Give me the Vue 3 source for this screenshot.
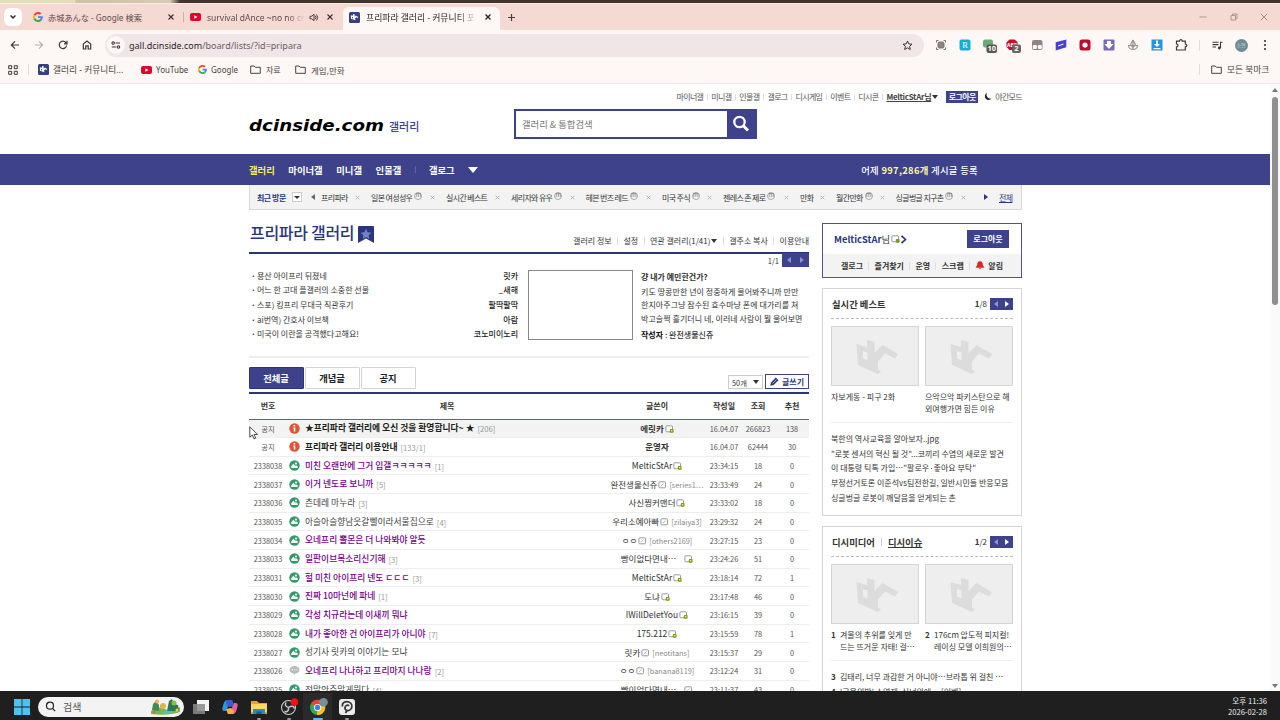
<script setup>
import {ref} from "vue";

const extensions = ['frame', 'r', 'green', 'abp', 'tamper', 'slash', 'rec', 'down', 'flame', 'blue', 'puzzle']

const topLinks = ['마이너갤', '미니갤', '인물갤', '갤로그', '디시게임', '이벤트', '디시콘']

const visits = [
  {name: '프리파라', width: 50},
  {name: '일본 여성성우', width: 75, minor: true},
  {name: '실시간 베스트', width: 65},
  {name: '세리자와 유우', width: 74.5, minor: true},
  {name: '헤븐 번즈 레드', width: 76.5, minor: true},
  {name: '미국 주식', width: 61, minor: true},
  {name: '젠레스 존 제로', width: 77, minor: true},
  {name: '만화', width: 36},
  {name: '월간만화', width: 59.5, minor: true},
  {name: '싱글벙글 지구촌', width: 81, minor: true},
]

const hotPosts = [
  {title: '용산 아이프리 뒤졌네', writer: '릿카'},
  {title: '어느 한 고대 플갤러의 소중한 선물', writer: '_새해'},
  {title: '스포) 킹프리 무대극 직관후기', writer: '팔딱팔딱'},
  {title: 'ai번역) 간호사 이브책', writer: '아람'},
  {title: '미국이 이란을 공격했다고해요!', writer: '코노미이노리'},
]

const tabs = ['전체글', '개념글', '공지']
const activeTab = ref('전체글')

// icon: notice | pic | talk, nick: fix (green lock) | semi | none
const posts = [
  {no: '공지', icon: 'notice', title: '★프리파라 갤러리에 오신 것을 환영합니다~ ★', reply: '206', writer: '에릿카', nick: 'fix', date: '16.04.07', count: '266823', rec: '138', bold: true, hover: true},
  {no: '공지', icon: 'notice', title: '프리파라 갤러리 이용안내', reply: '133/1', writer: '운영자', nick: 'none', date: '16.04.07', count: '62444', rec: '30', bold: true},
  {no: '2338038', icon: 'pic', title: '미친 오랜만에 그거 입갤ㅋㅋㅋㅋㅋ', reply: '1', writer: 'MelticStAr', nick: 'fix', date: '23:34:15', count: '18', rec: '0', visited: true},
  {no: '2338037', icon: 'pic', title: '이거 넨도로 보니까', reply: '5', writer: '완전생물신쥬', nick: 'semi', id: '[series1⋯', date: '23:33:49', count: '24', rec: '0', visited: true},
  {no: '2338036', icon: 'pic', title: '츤데레 마누라', reply: '3', writer: '사신찡커맨더', nick: 'fix', date: '23:33:02', count: '18', rec: '0'},
  {no: '2338035', icon: 'pic', title: '아슬아슬향남읏갈삘이라서울집으로', reply: '4', writer: '우리소예아빠', nick: 'semi', id: '[zilaiya3]', date: '23:29:32', count: '24', rec: '0'},
  {no: '2338034', icon: 'pic', title: '오네프리 뽈몬은 더 나와봐야 알듯', writer: 'ㅇㅇ', nick: 'semi', id: '[others2169]', date: '23:27:15', count: '23', rec: '0', visited: true},
  {no: '2338033', icon: 'pic', title: '일판이브목소리신기해', reply: '3', writer: '빵이없다면내⋯', nick: 'fix', far: true, date: '23:24:26', count: '51', rec: '0', visited: true},
  {no: '2338031', icon: 'pic', title: '헐 미친 아이프리 넨도 ㄷㄷㄷ', reply: '3', writer: 'MelticStAr', nick: 'fix', date: '23:18:14', count: '72', rec: '1', visited: true},
  {no: '2338030', icon: 'pic', title: '진짜 10마넌에 파네', reply: '1', writer: '도냐', nick: 'fix', date: '23:17:48', count: '46', rec: '0', visited: true},
  {no: '2338029', icon: 'pic', title: '각성 치규라는데 이새끼 뭐냐', writer: 'IWillDeletYou', nick: 'fix', date: '23:16:15', count: '39', rec: '0', visited: true},
  {no: '2338028', icon: 'pic', title: '내가 좋아한 건 아이프리가 아니야', reply: '7', writer: '175.212', nick: 'fix', date: '23:15:59', count: '78', rec: '1', visited: true},
  {no: '2338027', icon: 'pic', title: '성기사 릿카의 이야기는 모냐', writer: '릿카', nick: 'semi', id: '[neotitans]', date: '23:15:37', count: '29', rec: '0'},
  {no: '2338026', icon: 'talk', title: '오네프리 나나하고 프리마지 나나랑', reply: '2', writer: 'ㅇㅇ', nick: 'semi', id: '[banana8119]', date: '23:12:24', count: '31', rec: '0', visited: true},
  {no: '2338025', icon: 'pic', title: '전말안준말게뭔다', reply: '4', writer: '빵이없다면내⋯', nick: 'semi', far: true, date: '23:11:37', count: '43', rec: '0'},
]

const bestList = [
  '북한의 역사교육을 알아보자..jpg',
  '"로봇 센서의 혁신 될 것"...코끼리 수염의 새로운 발견',
  '이 대통령 틱톡 가입⋯"팔로우·좋아요 부탁"',
  '부정선거토론 이준석vs팀전한길, 일반시민들 반응모음',
  '싱글벙글 로봇이 깨달음을 얻게되는 촌',
]

const widgets = [
  {
    heads: ['실시간 베스트'],
    total: 8,
    cards: [{lines: ['자보게동 - 피구 2화']}, {lines: ['으악으악 파키스탄으로 해', '외여행가면 힘든 이유']}],
    list: bestList.map(text => ({text})),
  },
  {
    heads: ['디시미디어', '디시이슈'],
    total: 2,
    cards: [
      {rank: 1, lines: ['겨울의 추위를 잊게 만', '드는 뜨거운 자태! 걸⋯']},
      {rank: 2, lines: ['176cm 압도적 피지컬!', '레이싱 모델 이희원의⋯']},
    ],
    list: [
      {rank: 3, text: '김태리, 너무 과감한 거 아니야⋯브라톱 위 걸친 ⋯'},
      {rank: 4, text: "'금욕의밤' 소영재, 식녀의에⋯ [이벤]"},
    ],
  },
]
</script>

<template>
  <div class="screen">
    <div class="behind"></div>

    <div class="tabbar">
      <span class="tab-search">
        <svg width="8" height="8" viewBox="0 0 8 8"><path d="M1.6 2.6 4 5l2.4-2.4" fill="none" stroke="#222" stroke-width="1.4"/></svg>
      </span>
      <div class="tab tab-a">
        <svg class="google" width="10" height="10" viewBox="0 0 48 48">
          <path fill="#EA4335" d="M24 9.5c3.5 0 6.700 1.200 9.200 3.600l6.900-6.900C35.900 2.400 30.500 0 24 0 14.600 0 6.500 5.400 2.600 13.200l8 6.200C12.400 13.700 17.700 9.500 24 9.500z"/>
          <path fill="#4285F4" d="M47 24.500c0-1.600-.2-3.100-.4-4.500H24v9h12.900c-.6 3-2.300 5.500-4.800 7.200l7.700 6C44.400 38 47 31.800 47 24.500z"/>
          <path fill="#FBBC05" d="M10.500 28.600a14.500 14.500 0 0 1 0-9.200l-8-6.200a24 24 0 0 0 0 21.600z"/>
          <path fill="#34A853" d="M24 48c6.500 0 11.900-2.100 15.900-5.800l-7.700-6c-2.200 1.500-4.900 2.300-8.200 2.300-6.300 0-11.600-4.200-13.500-9.900l-8 6.200C6.500 42.600 14.600 48 24 48z"/>
        </svg>
        <span class="tab-text">赤城あんな - Google 検索</span>
        <svg class="close" width="8" height="8" viewBox="0 0 8 8"><path d="M1.500 1.500 6.500 6.500M6.500 1.500 1.500 6.500" stroke="#3b2f2d" stroke-width="1.100"/></svg>
      </div>
      <i class="tab-sep"></i>
      <div class="tab tab-b">
        <svg width="11" height="8" viewBox="0 0 11 8"><rect width="11" height="8" rx="2" fill="#e0032c"/><path d="M4.300 2.200v3.600L7.500 4z" fill="#fff"/></svg>
        <span class="tab-text fade">survival dAnce ~no no cry</span>
        <svg class="sound" width="10" height="9" viewBox="0 0 10 9"><path d="M1 3.200h1.800L5 1.300v6.400L2.800 5.800H1zM6.300 2.800q1.400 1.700 0 3.400M7.500 1.500q2.400 3 0 6" fill="none" stroke="#3b2f2d" stroke-width=".9"/></svg>
        <svg class="close" width="8" height="8" viewBox="0 0 8 8"><path d="M1.500 1.500 6.500 6.500M6.500 1.500 1.500 6.500" stroke="#3b2f2d" stroke-width="1.100"/></svg>
      </div>
      <div class="tab tab-c">
        <svg width="11" height="11" viewBox="0 0 11 11"><rect width="11" height="11" rx="1.500" fill="#37417f"/><path d="M1.800 3.300 4 3.800V2l1.700.6v2.200l1.300-1.300 2.300 1.700-.8.900-1.300-.8-1.200 1.300.5 1.700-4.500-1.600zM3 5v1.200l1 .4V5.300z" fill="#fff" fill-rule="evenodd"/></svg>
        <span class="tab-text fade">프리파라 갤러리 - 커뮤니티 포</span>
        <svg class="close" width="8" height="8" viewBox="0 0 8 8"><path d="M1.500 1.500 6.500 6.500M6.500 1.500 1.500 6.500" stroke="#222" stroke-width="1.300"/></svg>
      </div>
      <svg class="newtab" width="9" height="9" viewBox="0 0 9 9"><path d="M4.500 1v7M1 4.500h7" stroke="#4d3c39" stroke-width="1.200"/></svg>
      <div class="winctl">
        <svg width="8" height="8" viewBox="0 0 8 8"><path d="M.5 4h7" stroke="#b08e88" stroke-width=".9"/></svg>
        <svg width="8" height="8" viewBox="0 0 8 8"><path d="M1 2.500h4.500V7H1zM2.500 2.500V1H7v4.500H5.500" fill="none" stroke="#b08e88" stroke-width=".9"/></svg>
        <svg width="8" height="8" viewBox="0 0 8 8"><path d="m.8.800 6.400 6.400M7.200.8.800 7.200" stroke="#a3827c" stroke-width=".9"/></svg>
      </div>
    </div>

    <div class="toolbar">
      <span class="tool"><svg width="10" height="10" viewBox="0 0 10 10"><path d="M9 5H1.500M5 1.300 1.300 5 5 8.700" fill="none" stroke="#3d3735" stroke-width="1.200"/></svg></span>
      <span class="tool"><svg width="10" height="10" viewBox="0 0 10 10"><path d="M1 5h7.500M5 1.300 8.700 5 5 8.700" fill="none" stroke="#b5aeac" stroke-width="1.100"/></svg></span>
      <span class="tool"><svg width="10" height="10" viewBox="0 0 10 10"><path d="M8.600 5.500A3.700 3.700 0 1 1 7.800 2.500L9 3.800M9 .8v3H6" fill="none" stroke="#3d3735" stroke-width="1.200"/></svg></span>
      <span class="tool"><svg width="10" height="10" viewBox="0 0 10 10"><path d="M1.300 9V4L5 1.100 8.700 4v5H6.200V5.800H3.800V9z" fill="none" stroke="#3d3735" stroke-width="1.200"/></svg></span>
      <div class="omnibox">
        <span class="site-info"><svg width="10" height="8" viewBox="0 0 10 8" fill="none" stroke="#3d3735" stroke-width="1.100"><circle cx="2.200" cy="2" r="1.200"/><path d="M4.500 2H9M.8 6h4.500"/><circle cx="7.500" cy="6" r="1.200"/></svg></span>
        <span class="url"><b>gall.dcinside.com</b>/board/lists/?id=pripara</span>
        <svg class="star" width="11" height="11" viewBox="0 0 11 11"><path d="m5.500 1 1.300 2.900 3.200.3-2.400 2.100.7 3.200-2.800-1.700-2.800 1.700.7-3.200L1 4.200l3.200-.3z" fill="none" stroke="#3d3735" stroke-width="1"/></svg>
      </div>
      <div class="exts">
        <span class="tool" v-for="ext in extensions" :key="ext">
          <svg width="16" height="16" viewBox="0 0 16 16">
            <g v-if="ext == 'frame'" fill="none" stroke="#77716f"><path d="M3.500 5.500V3.500h2M10.500 3.500h2v2M12.500 10.500v2h-2M5.500 12.500h-2v-2"/><rect x="5" y="5" width="6" height="6" rx="1.500" fill="#8b8583"/></g>
            <g v-if="ext == 'r'"><rect x="2.500" y="2.500" width="11" height="11" rx="2" fill="#16aed6"/><text x="8" y="11.200" text-anchor="middle" font-size="8.500" fill="#fff" font-family="Liberation Serif">R</text></g>
            <g v-if="ext == 'green'"><rect x="2" y="2.500" width="10" height="8" rx="2" fill="#6cab76"/><rect x="5.500" y="7.500" width="10.500" height="8.500" rx="2" fill="#575553"/><text x="10.800" y="14.400" text-anchor="middle" font-size="7.500" font-weight="700" fill="#fff" font-family="Noto Sans">10</text></g>
            <g v-if="ext == 'abp'"><path d="M4.500 2.500h5L12.500 5v5l-3 3h-5l-3-3V5.500z" fill="#c70d2c"/><text x="7" y="9.500" text-anchor="middle" font-size="5" font-weight="700" fill="#fff" font-family="Noto Sans">ABP</text><rect x="7" y="7.500" width="9" height="8.500" rx="2" fill="#666260"/><text x="11.500" y="14.400" text-anchor="middle" font-size="7.500" font-weight="700" fill="#fff" font-family="Noto Sans">2</text></g>
            <g v-if="ext == 'tamper'"><rect x="3" y="3" width="10.500" height="10" rx="2" fill="#8a8785"/><rect x="3.800" y="8" width="4" height="4" rx="1" fill="#fff"/><rect x="8.800" y="8" width="4" height="4" rx="1" fill="#fff"/></g>
            <g v-if="ext == 'slash'"><path d="M2.700 5.200 13.300 2.600v7.600L2.700 13.500z" fill="#4b3fd0"/><path d="m5 9 5.500-2" stroke="#fff" stroke-width="1"/></g>
            <g v-if="ext == 'rec'"><rect x="2.500" y="2.500" width="11" height="11" rx="2.500" fill="#c30731"/><circle cx="8" cy="8" r="2.600" fill="#fff"/></g>
            <g v-if="ext == 'down'"><rect x="2.500" y="2.500" width="11" height="11" rx="1" fill="#7a68b8"/><path d="M6 4h4v3h2.500L8 12 3.500 7H6z" fill="#fff"/></g>
            <g v-if="ext == 'flame'"><path d="M8 3c.5 2 2.500 3 2.500 5.500M8 3c-.5 2-2.500 3-2.500 5.500M3.500 8.500a4.500 4 0 0 0 9 0zM8 5v7M5.500 7.500 8 10.500l2.500-3" fill="none" stroke="#999491" stroke-width="1.200"/></g>
            <g v-if="ext == 'blue'"><rect x="2.500" y="2.500" width="11" height="11" fill="#1e97e4"/><path d="M7 3.500h2V7h2l-3 3-3-3h2zM4.500 11h7v1.200h-7z" fill="#fff"/></g>
            <path v-if="ext == 'puzzle'" d="M3.500 4.200h3c-.2-2 3-2 2.800 0h3V7c2 0 2 2.800 0 2.800v3.200H3.500V9.800c2 0 2-2.800 0-2.800z" fill="none" stroke="#3d3735" stroke-width="1.200"/>
          </svg>
        </span>
      </div>
      <i class="tool-sep"></i>
      <span class="tool"><svg width="11" height="9" viewBox="0 0 11 9"><path d="M.5 1.200h6M.5 3.600h6M.5 6h3.500" stroke="#3d3735" stroke-width="1.100"/><path d="M8.500 7V1.200h2" fill="none" stroke="#3d3735" stroke-width="1.100"/><circle cx="7.300" cy="7" r="1.400" fill="#3d3735"/></svg></span>
      <span class="tool"><span class="avatar">소연</span></span>
      <span class="tool"><svg width="4" height="12" viewBox="0 0 4 12" fill="#3d3735"><circle cx="2" cy="2" r="1.100"/><circle cx="2" cy="6" r="1.100"/><circle cx="2" cy="10" r="1.100"/></svg></span>
    </div>

    <div class="bookmarks">
      <svg class="apps" width="10" height="10" viewBox="0 0 10 10" fill="none" stroke="#3d3735"><path d="M.7.700h3v3h-3zM6.300.7h3v3h-3zM.7 6.300h3v3h-3zM6.300 6.300h3v3h-3z"/></svg>
      <i class="bm-sep"></i>
      <span class="bm bm-gall"><svg width="11" height="11" viewBox="0 0 11 11"><rect width="11" height="11" rx="1.500" fill="#37417f"/><path d="M1.800 3.300 4 3.800V2l1.700.6v2.200l1.300-1.300 2.300 1.700-.8.900-1.300-.8-1.200 1.300.5 1.700-4.500-1.600zM3 5v1.200l1 .4V5.300z" fill="#fff" fill-rule="evenodd"/></svg>갤러리 - 커뮤니티...</span>
      <span class="bm bm-yt"><svg width="11" height="8" viewBox="0 0 11 8"><rect width="11" height="8" rx="2" fill="#e0032c"/><path d="M4.300 2.200v3.600L7.500 4z" fill="#fff"/></svg>YouTube</span>
      <span class="bm bm-g">
        <svg width="9" height="9" viewBox="0 0 48 48">
          <path fill="#EA4335" d="M24 9.500c3.500 0 6.700 1.200 9.200 3.600l6.900-6.900C35.900 2.400 30.500 0 24 0 14.600 0 6.500 5.400 2.600 13.200l8 6.200C12.400 13.700 17.700 9.500 24 9.500z"/>
          <path fill="#4285F4" d="M47 24.500c0-1.600-.2-3.100-.4-4.500H24v9h12.900c-.6 3-2.300 5.500-4.800 7.200l7.700 6C44.400 38 47 31.800 47 24.500z"/>
          <path fill="#FBBC05" d="M10.500 28.600a14.500 14.500 0 0 1 0-9.200l-8-6.200a24 24 0 0 0 0 21.600z"/>
          <path fill="#34A853" d="M24 48c6.500 0 11.900-2.100 15.900-5.800l-7.700-6c-2.200 1.500-4.900 2.300-8.200 2.300-6.300 0-11.600-4.200-13.500-9.900l-8 6.200C6.500 42.600 14.600 48 24 48z"/>
        </svg>Google</span>
      <span class="bm bm-f1"><svg width="11" height="9" viewBox="0 0 11 9"><path d="M.7 1h3.500l1.200 1.300h4.900V8.300H.7z" fill="none" stroke="#4a4341"/></svg>자료</span>
      <span class="bm bm-f2"><svg width="11" height="9" viewBox="0 0 11 9"><path d="M.7 1h3.500l1.200 1.300h4.900V8.300H.7z" fill="none" stroke="#4a4341"/></svg>게임,만화</span>
      <i class="bm-sep last"></i>
      <span class="bm bm-all"><svg width="11" height="9" viewBox="0 0 11 9"><path d="M.7 1h3.500l1.200 1.300h4.900V8.300H.7z" fill="none" stroke="#4a4341"/></svg>모든 북마크</span>
    </div>

    <div class="viewport">
      <div class="page">
        <header class="wrap header">
          <div class="utils">
            <a v-for="link in topLinks" :key="link">{{ link }}</a>
            <a class="me">MelticStAr님</a>
            <i class="down small"></i>
            <span class="logout">로그아웃</span>
            <svg class="moon" width="8" height="9" viewBox="0 0 8 9"><path d="M3 .8A3.800 3.800 0 1 0 7.700 6.500 4 4 0 0 1 3 .8z" fill="#222"/></svg>
            <span class="night">야간모드</span>
          </div>
          <div class="brand-row">
            <svg class="logo" width="136" height="18" viewBox="0 0 136 18"><text x="0" y="14" textLength="135" lengthAdjust="spacingAndGlyphs">dcinside.com</text></svg>
            <span class="logo-sub">갤러리</span>
            <div class="search">
              <span>갤러리 &amp; 통합검색</span>
              <div class="search-btn"><svg width="18" height="18" viewBox="0 0 18 18"><circle cx="7.500" cy="7" r="5.200" fill="none" stroke="#fff" stroke-width="2.300"/><path d="m11.300 10.800 4.700 4.700" stroke="#fff" stroke-width="3"/></svg></div>
            </div>
          </div>
        </header>

        <nav class="gnb">
          <div class="wrap gnb-in">
            <a class="on">갤러리</a><a>마이너갤</a><a>미니갤</a><a>인물갤</a><i class="gnb-sep"></i><a>갤로그</a><i class="down white"></i>
            <span class="posts-count">어제 <b>997,286개</b> 게시글 등록</span>
          </div>
        </nav>

        <div class="wrap visit">
          <b>최근 방문</b>
          <span class="visit-btn"><i class="down tiny"></i></span>
          <i class="tri left dark"></i>
          <div class="visit-items">
            <span class="visit-item" v-for="visit in visits" :key="visit.name" :style="{width: visit.width + 'px'}">
              {{ visit.name }}<em v-if="visit.minor">m</em><svg width="5" height="5" viewBox="0 0 5 5"><path d="m.7.700 3.600 3.600M4.300.7.700 4.300" stroke="#aaa" stroke-width=".8"/></svg>
            </span>
          </div>
          <i class="tri right dark"></i>
          <a>전체</a>
        </div>

        <div class="wrap content">
          <main>
            <div class="gall-head">
              <h1>프리파라 갤러리</h1>
              <svg width="16" height="17" viewBox="0 0 16 17"><path d="M0 1q0-1 1-1h14q1 0 1 1v16l-8-4.500L0 17z" fill="#29367c"/><path d="m8 2.800 1.600 3.500 3.900.4-2.900 2.600.8 3.700L8 11.100 4.600 13l.8-3.700-2.900-2.600 3.900-.4z" fill="#7481c8"/></svg>
              <div class="gall-links">
                <a>갤러리 정보</a><a>설정</a><a>연관 갤러리(1/41)<i class="down small"></i></a><a>갤주소 복사</a><a>이용안내</a>
              </div>
            </div>

            <section class="hot">
              <div class="pager"><span>1/1</span><div class="arrows wide"><i class="tri left dim"></i><i class="tri right dim"></i></div></div>
              <ul>
                <li v-for="post in hotPosts" :key="post.title"><span>{{ post.title }}</span><b>{{ post.writer }}</b></li>
              </ul>
              <div class="thumb"></div>
              <div class="preview">
                <strong>걍 내가 예민한건가?</strong>
                <p>키도 땅콩만한 년이 정중하게 물어봐주니까 만만<br>한지아주그냥 잠수된 효수마냥 폰에 대가리를 쳐<br>박고슬쩍 흘기더니 네, 이러네 사람이 뭘 물어보면</p>
                <div class="author"><b>작성자</b> : 완전생물신쥬</div>
              </div>
            </section>

            <div class="list-bar">
              <button
                  v-for="tab in tabs"
                  :key="tab"
                  :class="{active: tab == activeTab}"
                  @click="activeTab = tab">{{ tab }}</button>
              <span class="select">50개<i class="down small"></i></span>
              <span class="write"><svg width="9" height="9" viewBox="0 0 9 9"><path d="M.3 8.700 1 5.400 5.800.5l2.700 2.700-4.900 4.800z" fill="#29367c"/><path d="m2.500 6.500 4-4" stroke="#fff" stroke-width=".6"/></svg>글쓰기</span>
            </div>

            <div class="table">
              <div class="row thead"><span>번호</span><span>제목</span><span>글쓴이</span><span>작성일</span><span>조회</span><span>추천</span></div>
              <div class="row" v-for="post in posts" :key="post.no + post.title" :class="{bold: post.bold, hover: post.hover}">
                <span class="num">{{ post.no }}</span>
                <span class="title" :class="{visited: post.visited}">
                  <svg width="11" height="11" viewBox="0 0 11 11">
                    <g v-if="post.icon == 'notice'"><circle cx="5.500" cy="5.500" r="5.200" fill="#de5635"/><path d="M4.300 4.500h2v4h-1.500V5.500h-.5zM4.600 2h1.600v1.600H4.600z" fill="#fff"/></g>
                    <g v-if="post.icon == 'pic'"><circle cx="5.500" cy="5.500" r="5.200" fill="#35996a"/><path d="M2.300 8V6.200l2-2.400 1.900 2 .9-.6L8.700 6.500V8z" fill="#fff"/><circle cx="7" cy="3.500" r="1.100" fill="#fff"/></g>
                    <g v-if="post.icon == 'talk'"><ellipse cx="5.500" cy="4.800" rx="5" ry="3.700" fill="#b9b9b9"/><path d="m4.500 8 1 1.800 1-1.800z" fill="#b9b9b9"/><path d="M2.800 4.800h1.200M5 4.800h1.200M7.200 4.800h1.200" stroke="#fff" stroke-width="1"/></g>
                  </svg>
                  <a>{{ post.title }}</a><em v-if="post.reply">[{{ post.reply }}]</em>
                </span>
                <span class="writer" :class="{far: post.far}">
                  {{ post.writer }}<svg v-if="post.nick != 'none'" width="9" height="8" viewBox="0 0 9 8"><rect x=".9" y=".8" width="6.600" height="6" rx="1" fill="#fff" stroke="#999" stroke-width="1"/><path v-if="post.nick == 'semi'" d="m2.800 5 2.600-2.400" stroke="#aaa" stroke-width=".9"/><rect v-if="post.nick == 'fix'" x="4.800" y="3.900" width="3.800" height="3.800" rx="1" fill="#7d9c0e"/><rect v-if="post.nick == 'fix'" x="6" y="5" width="1.400" height="1.400" fill="#e9f08c"/></svg><em v-if="post.id">{{ post.id }}</em>
                </span>
                <span>{{ post.date }}</span>
                <span>{{ post.count }}</span>
                <span>{{ post.rec }}</span>
              </div>
            </div>
          </main>

          <aside>
            <section class="login">
              <div class="login-top">
                <b>MelticStAr</b>님
                <svg width="9" height="8" viewBox="0 0 9 8"><rect x=".9" y=".8" width="6.600" height="6" rx="1" fill="#fff" stroke="#999" stroke-width="1"/><rect x="4.800" y="3.900" width="3.800" height="3.800" rx="1" fill="#7d9c0e"/></svg>
                <svg width="7" height="9" viewBox="0 0 7 9"><path d="M1.500.8 5.500 4.500 1.500 8.200" fill="none" stroke="#29367c" stroke-width="1.700"/></svg>
                <span class="logout">로그아웃</span>
              </div>
              <div class="login-menu">
                <a>갤로그</a><a>즐겨찾기</a><a>운영</a><a>스크랩</a>
                <a><svg width="10" height="9" viewBox="0 0 10 9"><path d="M5 .3C2.800.3 2.200 2 2.200 4L.6 6.800h8.800L7.800 4C7.800 2 7.200.3 5 .3zM3.800 7.300h2.400Q5 9 3.800 7.300z" fill="#d92a21"/></svg>알림</a>
              </div>
            </section>

            <section class="widget" v-for="widget in widgets" :key="widget.total">
              <div class="widget-head">
                <h3 v-for="head in widget.heads" :key="head">{{ head }}</h3>
                <span class="pages"><b>1</b>/{{ widget.total }}</span>
                <div class="arrows"><i class="tri left dim"></i><i class="tri right"></i></div>
              </div>
              <div class="cards">
                <div class="card" v-for="card in widget.cards" :key="card.lines[0]">
                  <div class="noimg"><svg width="86" height="58" viewBox="0 0 86 58" fill="#dcdcdc"><path d="M24.500 17 35 20v-7l7.500 2v11l8-8 15.500 9-3 4.500-10-5-7 8v8l3 2-3 2.500-20-9zM31 24v7.500l4.500 2V25.500z" fill-rule="evenodd"/></svg></div>
                  <div class="caption">
                    <b v-if="card.rank">{{ card.rank }}</b>
                    <span><template v-for="line in card.lines" :key="line">{{ line }}<br></template></span>
                  </div>
                </div>
              </div>
              <ul>
                <li v-for="item in widget.list" :key="item.text"><b v-if="item.rank">{{ item.rank }}</b>{{ item.text }}</li>
              </ul>
            </section>
          </aside>
        </div>
      </div>
      <div class="scrollbar"><i class="up"></i><div class="thumb-bar"></div><i class="dn"></i></div>
    </div>

    <div class="taskbar">
      <svg class="start" width="16" height="16" viewBox="0 0 16 16" fill="#4cc2f4"><path d="M0 0h7.600v7.600H0zM8.400 0H16v7.600H8.400zM0 8.400h7.600V16H0zM8.400 8.400H16V16H8.400z"/></svg>
      <div class="task-search">
        <svg width="11" height="11" viewBox="0 0 11 11"><circle cx="5" cy="4.700" r="3.500" fill="none" stroke="#222" stroke-width="1.200"/><path d="m7.500 7.300 2.700 2.900" stroke="#222" stroke-width="1.200"/></svg>
        <span>검색</span>
        <svg width="31" height="17" viewBox="0 0 31 17"><path d="M1 13q7-6 14-2t15-2v5q-12 4-29 2z" fill="#7eb64e"/><path d="M2 12 3 6l3-3 3 4v6z" fill="#3b8c50"/><circle cx="13" cy="8" r="3" fill="#e3b148"/><circle cx="7" cy="3.500" r="2" fill="#f4b14e"/><path d="M17 13 19 3l3-2 2 5 4 1 1 6z" fill="#2c7752"/><circle cx="24" cy="5" r="2.500" fill="#8abf3d"/><path d="M12 16q3-5 7-3l3 2z" fill="#54bfc5"/><circle cx="4" cy="14" r="1.500" fill="#dc664b"/><circle cx="27" cy="12" r="1.500" fill="#eec95e"/></svg>
      </div>
      <div class="task"><svg width="18" height="18" viewBox="0 0 18 18"><rect x="5" y="2" width="12" height="11" fill="#f5f5f5"/><rect x="1" y="6" width="12" height="10" fill="#8a8a8a" opacity=".85"/></svg></div>
      <div class="task"><svg width="18" height="18" viewBox="0 0 18 18"><path d="M6 2h5l1.500 4H8L5 13H3.500Q.5 13 1.500 9.500L3 4.500Q4 2 6 2z" fill="#239cdd"/><path d="M5.500 2h5.300L13 8l-5 1-3-3z" fill="#3d5bd3"/><path d="M12 16H7l-1.500-4H10l3-7h1.500q3 0 2 3.500L15 13.500Q14 16 12 16z" fill="#e4609b"/><path d="M12 16H7l-2-5 5-1 3 3z" fill="#efb33b"/></svg></div>
      <div class="task open"><svg width="18" height="18" viewBox="0 0 18 18"><path d="M1 3h6l2 2h8v11H1z" fill="#eba41f"/><path d="M1 6h16v8H1z" fill="#ffd75e"/><path d="M3 11h12v5H3z" fill="#2d87c8"/><path d="M6.500 13.500h5V16h-5z" fill="#145a94"/></svg></div>
      <div class="task open"><svg width="20" height="18" viewBox="0 0 20 18"><circle cx="9.500" cy="9.500" r="7" fill="#26252a" stroke="#c9c9c9" stroke-width="1.100"/><path d="M9.500 9.500Q5 8 7 4.500M9.500 9.500q4.500-3 6 1M9.500 9.500q.5 5-4 4" fill="none" stroke="#c9c9c9" stroke-width="1.500"/><circle cx="15.500" cy="4" r="3.800" fill="#ee1111"/></svg></div>
      <div class="task open current"><svg width="20" height="18" viewBox="0 0 20 18"><circle cx="9.500" cy="9.500" r="7.500" fill="#34a853"/><path d="M9.500 9.500 3 5.700a7.500 7.500 0 0 1 13.500.6z" fill="#ea4335"/><path d="M9.500 9.500 16.500 6.300A7.500 7.500 0 0 1 9 17z" fill="#fbc116"/><circle cx="9.500" cy="9.500" r="3.600" fill="#fff"/><circle cx="9.500" cy="9.500" r="2.700" fill="#3f80ea"/><circle cx="15.500" cy="4.300" r="4.300" fill="#78909c"/></svg></div>
      <div class="task open"><svg width="18" height="18" viewBox="0 0 18 18"><rect x="1" y="1" width="16" height="16" rx="3" fill="#ececec"/><path d="M4.500 8.500C3.500 4 8 3 11 4s4 5 1.500 7.500-6 .5-5.500-2S10 6.500 11 8M9 12.500 7.500 15" fill="none" stroke="#333" stroke-width="1.700"/></svg></div>
      <div class="clock">오후 11:36<br>2026-02-28</div>
    </div>

    <svg class="cursor" width="10" height="14" viewBox="0 0 10 14"><path d="M.8.800v10.400l2.500-2.300 1.700 4 1.700-.7L5 8.400h3.500z" fill="#fff" stroke="#222" stroke-width=".8"/></svg>
  </div>
</template>

<style>
body {
  margin: 0;
  overflow: hidden;
}
</style>

<style scoped>
.screen {
  position: relative;
  width: 1280px;
  height: 720px;
  overflow: hidden;
  display: flex;
  flex-direction: column;
  background: #fff;
  color: #333;
  font-family: "Noto Sans CJK KR", "Noto Sans", sans-serif;
  font-size: 8px;
  white-space: nowrap;
}

.screen * {
  box-sizing: border-box;
}

svg {
  display: block;
  flex: none;
}

i, em {
  font-style: normal;
}

/* browser chrome */
.behind {
  height: 3px;
  flex: none;
  background: linear-gradient(90deg, #e3dfba 0 75px, #cfc4a6 76px 110px, #d8cbb4 170px, #40362e 180px);
}

.tabbar {
  height: 27px;
  flex: none;
  display: flex;
  align-items: center;
  padding-left: 4px;
  background: #f5d9d3;
  border-top: 1px solid #fbebe7;
  font-family: "Noto Sans", "Noto Sans CJK JP", "Noto Sans CJK KR", sans-serif;
  font-size: 8.5px;
  color: #5c4d4a;
}

.tab-search {
  width: 18px;
  height: 18px;
  border-radius: 6px;
  background: #fff;
  display: flex;
  align-items: center;
  justify-content: center;
}

.tab {
  display: flex;
  align-items: center;
}

.tab-a {
  width: 161px;
  padding: 0 8px 0 11px;
}

.tab-text {
  margin-left: 6px;
  overflow: hidden;
}

.tab-a .tab-text {
  margin-left: 5px;
  font-size: 8.2px;
}

.fade {
  -webkit-mask-image: linear-gradient(90deg, #000 82%, transparent);
}

.close {
  margin-left: auto;
}

.tab-sep {
  width: 1px;
  height: 10px;
  background: #d3aca5;
}

.tab-b {
  width: 159px;
  padding: 0 9px 0 6px;
}

.tab-b .tab-text {
  width: 98px;
}

.sound {
  margin-left: 4px;
}

.tab-c {
  width: 157px;
  height: 23px;
  align-self: flex-end;
  padding: 0 8px 3px 6px;
  border-radius: 6px 6px 0 0;
  background: #fdf8f5;
  color: #2b2423;
  font-family: "Noto Sans CJK KR", sans-serif;
  font-size: 8.9px;
}

.tab-c .tab-text {
  width: 111px;
}

.newtab {
  margin-left: 7px;
}

.winctl {
  margin-left: auto;
  display: flex;
  gap: 22.5px;
  padding-right: 12px;
}

.toolbar {
  height: 30px;
  flex: none;
  display: flex;
  align-items: center;
  padding-left: 3px;
  background: #fdf8f5;
}

.tool {
  width: 24px;
  display: flex;
  align-items: center;
  justify-content: center;
}

.omnibox {
  width: 819px;
  height: 23px;
  margin-left: 6px;
  border-radius: 12px;
  background: #f0e5e7;
  display: flex;
  align-items: center;
}

.site-info {
  width: 18px;
  height: 18px;
  margin-left: 2px;
  border-radius: 50%;
  background: #fdf8f5;
  display: flex;
  align-items: center;
  justify-content: center;
}

.url {
  margin-left: 4px;
  font-family: "Noto Sans", sans-serif;
  font-size: 9px;
  color: #6a5f5f;
}

.url b {
  font-weight: 400;
  color: #2d2625;
}

.star {
  margin-left: auto;
  margin-right: 11px;
}

.exts {
  display: flex;
  margin-left: 5px;
}

.tool-sep {
  width: 1px;
  height: 11px;
  margin: 0 5px 0 6px;
  background: #ecd9d6;
}

.avatar {
  width: 13px;
  height: 13px;
  border-radius: 50%;
  background: #6e8c96;
  color: #c9d8dc;
  font-size: 5px;
  line-height: 12px;
  text-align: center;
}

.bookmarks {
  height: 24px;
  flex: none;
  display: flex;
  align-items: center;
  padding: 0 10px 4px 8px;
  background: #fdf8f5;
  border-bottom: 1px solid #eee6e4;
  font-family: "Noto Sans", "Noto Sans CJK KR", sans-serif;
  font-size: 8px;
  color: #4a4341;
}

.bm-sep {
  width: 1px;
  height: 11px;
  margin-left: 10px;
  background: #ecd9d6;
}

.bm {
  display: flex;
  align-items: center;
  gap: 4px;
}

.bm-gall {
  width: 103px;
  margin-left: 9px;
  font-size: 8.7px;
}

.bm-yt {
  width: 57px;
}

.bm-g {
  width: 52px;
}

.bm-f1 {
  width: 45px;
  gap: 5px;
}

.bm-f2 {
  gap: 5px;
  font-size: 8.5px;
}

.bm-sep.last {
  margin-left: auto;
  margin-right: 11px;
}

.bm-all {
  gap: 5px;
  width: 59px;
  font-size: 8.7px;
}

/* page */
.viewport {
  height: 607px;
  flex: none;
  display: flex;
  overflow: hidden;
}

.page {
  width: 1270px;
  background: #fff;
}

.wrap {
  width: 773px;
  margin-left: 249px;
}

.down {
  display: inline-block;
  border: 3.5px solid transparent;
  border-bottom: 0;
  border-top: 4px solid #333;
}

.down.white {
  border-width: 6px 5px 0;
  border-top-color: #fff;
}

.down.tiny {
  border-width: 3px 3px 0;
}

.tri {
  border: 3px solid transparent;
}

.tri.left {
  border-right: 4px solid #fff;
  border-left: 0;
}

.tri.right {
  border-left: 4px solid #fff;
  border-right: 0;
}

.tri.left.dark {
  border-right-color: #666;
}

.tri.right.dark {
  border-left-color: #29367c;
}

.tri.left.dim {
  border-right-color: #8c95cf;
}

.tri.right.dim {
  border-left-color: #8c95cf;
}

.header {
  height: 70px;
}

.utils {
  height: 25px;
  display: flex;
  align-items: center;
  justify-content: flex-end;
  letter-spacing: -.67px;
  color: #555;
}

.utils a {
  display: flex;
  align-items: center;
}

.utils a:not(.me)::after {
  content: "";
  width: 1px;
  height: 6px;
  margin: 0 3.5px;
  background: #ddd;
}

.utils .me {
  font-weight: 700;
  letter-spacing: -.3px;
  color: #444;
  text-decoration: underline;
}

.utils .down {
  margin-left: 1px;
}

.logout {
  background: #3d428b;
  color: #fff;
  font-weight: 700;
  text-align: center;
}

.utils .logout {
  width: 32px;
  height: 12px;
  line-height: 12px;
  margin-left: 8px;
}

.moon {
  margin: 0 3px 0 6px;
}

.brand-row {
  display: flex;
  align-items: flex-start;
}

.logo {
  margin-top: 8px;
  overflow: visible;
}

.logo text {
  font-family: "DejaVu Sans", sans-serif;
  font-weight: 700;
  font-style: italic;
  font-size: 16.5px;
  fill: #000;
}

.logo-sub {
  margin: 8px 0 0 4px;
  width: 125px;
  font-size: 11px;
  font-weight: 500;
  line-height: 18px;
  color: #3d428b;
}

.search {
  width: 243px;
  height: 30px;
  border: 2.6px solid #3d428b;
  display: flex;
  align-items: center;
  justify-content: space-between;
  padding-left: 6px;
  font-size: 9.33px;
  color: #777;
}

.search-btn {
  width: 28px;
  align-self: stretch;
  display: flex;
  align-items: center;
  justify-content: center;
  background: #3d428b;
}

.gnb {
  height: 31px;
  background: #3d428b;
  color: #fff;
}

.gnb-in {
  height: 31px;
  display: flex;
  align-items: center;
  font-size: 9.33px;
  font-weight: 700;
}

.gnb-in a {
  margin-right: 13.6px;
}

.gnb-in .on {
  color: #f9f04c;
}

.gnb-sep {
  width: 1px;
  height: 7px;
  margin-right: 13px;
  background: #5c63ab;
}

.posts-count {
  margin: 0 44px 0 auto;
  font-weight: 500;
  letter-spacing: .32px;
}

.posts-count b {
  color: #fdf8a2;
}

.visit {
  height: 25px;
  display: flex;
  align-items: center;
  padding-left: 7px;
  border: 1px solid #d8d8d8;
  border-top: 0;
  background: #f3f3f3;
  letter-spacing: -.67px;
}

.visit b {
  width: 35px;
  letter-spacing: -.5px;
  color: #29367c;
}

.visit-btn {
  width: 10px;
  height: 10px;
  margin-right: 9px;
  border: 1px solid #ccc;
  background: #fff;
  display: flex;
  align-items: center;
  justify-content: center;
}

.visit-items {
  display: flex;
  margin-left: 6px;
  width: 663px;
}

.visit-item {
  display: flex;
  align-items: center;
}

.visit-item em {
  width: 8px;
  height: 8px;
  margin: -3px 0 0 2px;
  border: .8px solid #aaa;
  border-radius: 50%;
  font-size: 6px;
  line-height: 4.5px;
  text-align: center;
  letter-spacing: 0;
  color: #666;
}

.visit-item svg {
  margin: 0 11px 0 auto;
}

.visit a {
  margin-left: 11px;
  color: #29367c;
  text-decoration: underline;
}

.content {
  display: flex;
  justify-content: space-between;
  margin-top: -1px;
}

main {
  width: 560px;
}

.gall-head {
  height: 45px;
  display: flex;
  border-bottom: 2px solid #29367c;
}

h1 {
  margin: 11px 4px 0 1px;
  font-size: 16px;
  font-weight: 500;
  line-height: 24px;
  letter-spacing: -.3px;
  color: #29367c;
}

.gall-head > svg {
  margin-top: 17px;
}

.gall-links {
  height: 12px;
  margin: 26px 0 0 auto;
  display: flex;
  align-items: center;
  line-height: 12px;
}

.gall-links a {
  display: flex;
  align-items: center;
}

.gall-links a + a::before {
  content: "";
  width: 1px;
  height: 8px;
  margin: 0 5.400px;
  background: #ddd;
}

.gall-links .down {
  margin-left: 1px;
}

.hot {
  position: relative;
  height: 104px;
  display: flex;
  padding-top: 16px;
  border-bottom: 2px solid #eee;
}

.pager {
  position: absolute;
  top: -1px;
  right: 0;
  display: flex;
  align-items: center;
  gap: 3px;
  font-size: 7.5px;
}

.arrows {
  width: 23px;
  height: 12px;
  display: flex;
  align-items: center;
  justify-content: space-around;
  background: #3d428b;
}

.arrows.wide {
  width: 27px;
  height: 14px;
}

ul {
  list-style: none;
  margin: 0;
  padding: 0;
}

.hot ul {
  width: 269px;
  flex: none;
  line-height: 14.67px;
  padding-left: 2px;
  margin-top: -1.5px;
}

.hot li {
  display: flex;
}

.hot li::before {
  content: "·";
  width: 6px;
  font-weight: 700;
}

.hot li b {
  margin-left: auto;
  font-weight: 500;
  color: #222;
}

.thumb {
  width: 105px;
  height: 70px;
  flex: none;
  margin-left: 10px;
  border: 1px solid #888;
}

.preview {
  margin-left: 8px;
}

.preview strong {
  display: block;
  line-height: 14px;
}

.preview p {
  margin: 1px 0 2px;
  line-height: 13.4px;
  letter-spacing: .05px;
}

.author {
  line-height: 15px;
  font-weight: 500;
}

.author b {
  color: #111;
}

.list-bar {
  height: 34px;
  display: flex;
  align-items: flex-end;
  padding-bottom: 3px;
}

.list-bar button {
  width: 55px;
  height: 22px;
  margin-right: 1px;
  padding: 0 1px 1px 0;
  border: 1px solid #d5d5d5;
  border-radius: 1px;
  background: #fff;
  color: #222;
  font: 700 9.33px "Noto Sans CJK KR", sans-serif;
}

.list-bar button.active {
  border-color: #29367c;
  background: #3d428b;
  color: #fff;
}

.select {
  width: 35px;
  height: 14px;
  margin: 0 2px 0 auto;
  padding: 0 3px;
  border: 1px solid #ccc;
  display: flex;
  align-items: center;
  justify-content: space-between;
  font-size: 7.33px;
}

.write {
  width: 44px;
  height: 15px;
  border: 1px solid #3d428b;
  display: flex;
  align-items: center;
  justify-content: center;
  gap: 3px;
  font-weight: 700;
  color: #29367c;
}

.table {
  border-top: 2px solid #29367c;
}

.row {
  height: 18.67px;
  display: grid;
  grid-template-columns: 38px 320px 100px 34px 34px 34px;
  align-items: center;
  border-bottom: 1px solid #eee;
  text-align: center;
  font-size: 7.33px;
  color: #555;
}

.row > span {
  display: flex;
  justify-content: center;
}

.row.thead {
  height: 25.5px;
  padding-bottom: 1px;
  border-bottom-color: #5b639b;
  font-size: 8px;
  font-weight: 700;
  color: #333;
}

.row.hover {
  background: #f3f3f3;
}

.row .title {
  justify-content: flex-start;
  align-items: center;
  padding-left: 2px;
  font-size: 8.75px;
  line-height: 14px;
  color: #444;
}

.title a {
  margin-left: 5px;
}

.row .title.visited {
  color: #770088;
}

.title.visited a {
  font-weight: 500;
}

.bold .title a {
  font-weight: 700;
  color: #222;
}

.title em {
  margin: 2px 0 0 3px;
  font-size: 7.6px;
  color: #999;
}

.row .writer {
  align-items: center;
  margin-top: -1px;
  font-size: 8.5px;
  color: #333;
}

.bold .writer {
  font-weight: 700;
}

.writer svg {
  margin: 2px 0 0 1px;
}

.writer.far svg {
  margin-left: 8px;
}

.writer em {
  margin: 1px 0 0 2px;
  font-size: 7.33px;
  color: #888;
}

/* sidebar */
aside {
  width: 200px;
  padding-top: 14px;
}

.login {
  height: 55px;
  border: 1px solid #50547f;
}

.login-top {
  height: 30px;
  display: flex;
  align-items: center;
  padding: 0 12px 0 11px;
  font-size: 9.33px;
}

.login-top b {
  color: #29367c;
}

.login-top svg:first-of-type {
  margin-left: 1px;
}

.login-top .logout {
  width: 42px;
  height: 18px;
  margin-left: auto;
  line-height: 18px;
  font-size: 8px;
}

.login-menu {
  height: 23px;
  display: flex;
  align-items: center;
  justify-content: center;
  background: #f3f3f3;
  font-weight: 700;
}

.login-menu a {
  display: flex;
  align-items: center;
}

.login-menu a + a::before {
  content: "";
  width: 1px;
  height: 8px;
  margin: 0 5.5px 0 5px;
  background: #ddd;
}

.login-menu svg {
  margin-right: 3px;
}

.widget {
  height: 228px;
  margin-top: 10px;
  padding: 0 8px;
  border: 1px solid #d5d5d5;
}

.widget-head {
  height: 30px;
  display: flex;
  align-items: center;
  padding-left: 1px;
  border-bottom: 1px dashed #bbb;
}

h3 {
  margin: 0;
  display: flex;
  align-items: center;
  font-size: 9.33px;
  line-height: 14px;
  font-weight: 700;
}

h3 + h3 {
  text-decoration: underline;
}

h3 + h3::before {
  content: "";
  width: 1px;
  height: 8px;
  margin: 0 6px;
  background: #ccc;
}

.pages {
  margin: 0 3px 0 auto;
}

.cards {
  display: flex;
  justify-content: space-between;
  height: 104px;
  padding-top: 7px;
  border-bottom: 1px solid #eee;
}

.card {
  width: 88px;
}

.noimg {
  width: 88px;
  height: 60px;
  border: 1px solid #d5d5d5;
  background: #eee;
  overflow: hidden;
}

.caption {
  display: flex;
  margin-top: 5px;
  line-height: 12px;
}

.caption b, .widget li b {
  width: 9px;
  flex: none;
  color: #333;
}

.widget ul {
  padding-top: 9px;
  line-height: 14.67px;
}

.widget li {
  display: flex;
}

.scrollbar {
  width: 10px;
  background: #fafafa;
  display: flex;
  flex-direction: column;
  align-items: center;
}

.thumb-bar {
  width: 6px;
  height: 208px;
  margin-top: 5px;
  border-radius: 3px;
  background: #8f8f8f;
}

.up {
  margin-top: 4px;
  border: 3px solid transparent;
  border-top: 0;
  border-bottom: 4px solid #777;
}

.dn {
  margin: auto 0 3px;
  border: 3px solid transparent;
  border-bottom: 0;
  border-top: 4px solid #777;
}

/* taskbar */
.taskbar {
  height: 29px;
  flex: none;
  display: flex;
  align-items: center;
  padding: 2px 13px 0 14px;
  background: #1f1f20;
}

.task-search {
  width: 146px;
  height: 20px;
  margin: 0 2px 0 8px;
  border-radius: 10px;
  background: #f3f3f3;
  display: flex;
  align-items: center;
  padding: 0 3px 0 7px;
  font-size: 10px;
  color: #555;
}

.task-search span {
  margin: 0 auto 0 7px;
}

.task {
  position: relative;
  width: 29.3px;
  height: 27px;
  display: flex;
  align-items: center;
  justify-content: center;
}

.task.open::after {
  content: "";
  position: absolute;
  bottom: 0;
  width: 4px;
  height: 2px;
  border-radius: 1px;
  background: #999;
}

.task.current {
  background: #2a2a2c;
}

.task.current::after {
  width: 10px;
  background: #60bdf0;
}

.clock {
  margin: -2px 0 0 auto;
  text-align: right;
  font-size: 7.6px;
  line-height: 11px;
  color: #eee;
}

.cursor {
  position: absolute;
  left: 249px;
  top: 426px;
}
</style>
